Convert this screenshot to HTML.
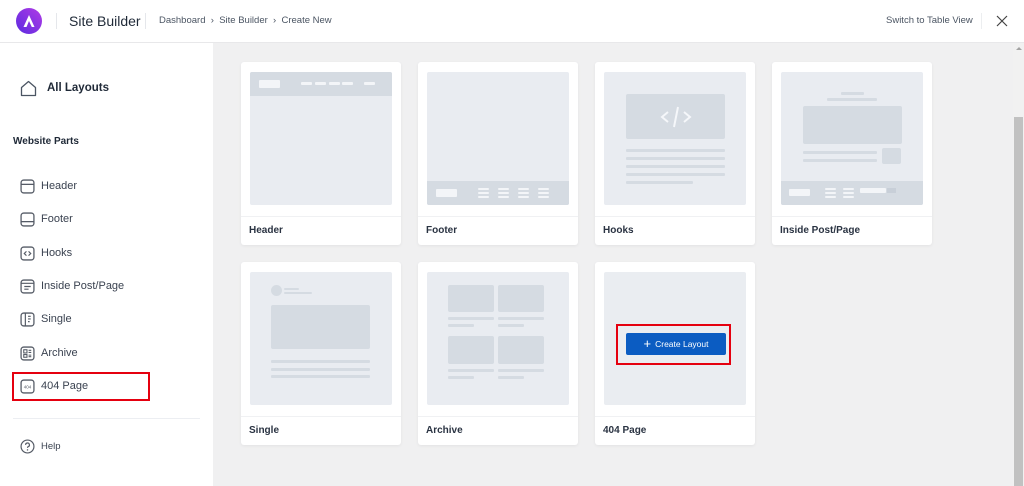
<!DOCTYPE html>
<html><head><meta charset="utf-8"><style>
*{margin:0;padding:0;box-sizing:border-box}
body{width:1024px;height:486px;overflow:hidden;background:#f0f0f1;font-family:"Liberation Sans",sans-serif;color:#1e293b;position:relative}
.a{position:absolute}
.hdr{left:0;top:0;width:1024px;height:43px;background:#fff;border-bottom:1px solid #e8e8ea}
.side{left:0;top:43px;width:213px;height:443px;background:#fff}
.card{position:absolute;width:160px;height:183px;background:#fff;border-radius:3px;box-shadow:0 1px 3px rgba(0,0,0,.06)}
.pv{position:absolute;left:9px;top:10px;width:142px;height:133px;background:#e9ecf1;border-radius:2px;overflow:hidden}
.lbl{position:absolute;left:0;top:154px;width:160px;border-top:1px solid #f0f1f3;padding:7px 8px;font-size:10px;font-weight:bold;color:#2a3342;line-height:14px}
.d{position:absolute;background:#d5dbe2;border-radius:1px}
.w{position:absolute;background:#f3f5f8;border-radius:1px}
.it{position:absolute;left:20px;font-size:11px;color:#3a4250;display:flex;align-items:center;gap:6px;height:16px}
.it svg{width:15px;height:15px;flex:none}
</style></head><body>
<div class="a hdr"></div>
<svg class="a" style="left:16px;top:8px" width="26" height="26" viewBox="0 0 26 26"><defs><linearGradient id="g" x1="0" y1="1" x2="1" y2="0"><stop offset="0" stop-color="#5b2be0"/><stop offset="1" stop-color="#b13be6"/></linearGradient></defs><circle cx="13" cy="13" r="13" fill="url(#g)"/><path d="M7.5 19 L13 7 L18.5 19 L15.8 19 L13 13 L10.5 19Z" fill="#fff"/></svg>
<div class="a" style="left:56px;top:13px;width:1px;height:16px;background:#e5e7eb"></div>
<div class="a" style="left:69px;top:13px;font-size:14px;color:#1f2937;font-weight:500">Site Builder</div>
<div class="a" style="left:145px;top:13px;width:1px;height:16px;background:#e5e7eb"></div>
<div class="a" style="left:159px;top:15px;font-size:9.5px;color:#4b5563">Dashboard &nbsp;›&nbsp; Site Builder &nbsp;›&nbsp; Create New</div>
<div class="a" style="left:886px;top:15px;font-size:9.5px;color:#4b5563">Switch to Table View</div>
<div class="a" style="left:981px;top:13px;width:1px;height:16px;background:#eceef0"></div>
<svg class="a" style="left:996px;top:15px" width="12" height="12" viewBox="0 0 12 12"><path d="M1 1L11 11M11 1L1 11" stroke="#444" stroke-width="1.2"/></svg>

<div class="a side"></div>
<svg class="a" style="left:20px;top:80px" width="17" height="17" viewBox="0 0 17 17"><path d="M1.5 7.5 L8.5 1.5 L15.5 7.5 V15.5 H1.5Z" fill="none" stroke="#4b5563" stroke-width="1.3" stroke-linejoin="round"/></svg>
<div class="a" style="left:47px;top:82px;font-size:11.5px;font-weight:bold;color:#1f2937">All Layouts</div>
<div class="a" style="left:13px;top:136px;font-size:10px;font-weight:bold;color:#1f2937">Website Parts</div>
<div class="it" style="top:178px"><svg viewBox="0 0 14 14"><rect x="1" y="1" width="12" height="12" rx="2.5" fill="none" stroke="#555b66" stroke-width="1.2"/><path d="M1 5H13" stroke="#555b66" stroke-width="1.2"/></svg>Header</div>
<div class="it" style="top:211px"><svg viewBox="0 0 14 14"><rect x="1" y="1" width="12" height="12" rx="2.5" fill="none" stroke="#555b66" stroke-width="1.2"/><path d="M1 9H13" stroke="#555b66" stroke-width="1.2"/></svg>Footer</div>
<div class="it" style="top:245px"><svg viewBox="0 0 14 14"><rect x="1" y="1" width="12" height="12" rx="2.5" fill="none" stroke="#555b66" stroke-width="1.2"/><path d="M6 5L4 7L6 9M8 5L10 7L8 9" fill="none" stroke="#555b66" stroke-width="1.1"/></svg>Hooks</div>
<div class="it" style="top:278px"><svg viewBox="0 0 14 14"><rect x="1" y="1" width="12" height="12" rx="2.5" fill="none" stroke="#555b66" stroke-width="1.2"/><path d="M1 4H13M4 7H10M4 9.5H8" stroke="#555b66" stroke-width="1.1"/></svg>Inside Post/Page</div>
<div class="it" style="top:311px"><svg viewBox="0 0 14 14"><rect x="1" y="1" width="12" height="12" rx="2.5" fill="none" stroke="#555b66" stroke-width="1.2"/><path d="M5 1V13M7.5 4H10M7.5 6.5H10M7.5 9H9" stroke="#555b66" stroke-width="1.1"/></svg>Single</div>
<div class="it" style="top:345px"><svg viewBox="0 0 14 14"><rect x="1" y="1" width="12" height="12" rx="2.5" fill="none" stroke="#555b66" stroke-width="1.2"/><rect x="3.5" y="3.5" width="3" height="3" fill="none" stroke="#555b66"/><rect x="3.5" y="8" width="3" height="2.5" fill="none" stroke="#555b66"/><path d="M8 4H10.5M8 6H10.5M8 8.5H10.5M8 10H10.5" stroke="#555b66"/></svg>Archive</div>
<div class="it" style="top:378px"><svg viewBox="0 0 14 14"><rect x="1" y="1" width="12" height="12" rx="2.5" fill="none" stroke="#555b66" stroke-width="1.2"/><text x="7" y="8.7" font-size="4.2" text-anchor="middle" fill="#555b66" font-family="Liberation Sans">404</text></svg>404 Page</div>
<div class="a" style="left:12px;top:372px;width:138px;height:29px;border:2px solid #e5000f"></div>
<div class="a" style="left:13px;top:418px;width:187px;height:1px;background:#eceef2"></div>
<div class="it" style="top:438px;font-size:9.5px"><svg viewBox="0 0 14 14"><circle cx="7" cy="7" r="6" fill="none" stroke="#555b66" stroke-width="1.1"/><path d="M5.2 5.5a1.8 1.8 0 1 1 2.4 1.7c-.5.2-.6.5-.6 1.1" fill="none" stroke="#555b66" stroke-width="1.1"/><circle cx="7" cy="10.2" r=".7" fill="#555b66"/></svg>Help</div>

<div class="a" style="left:1013px;top:43px;width:11px;height:443px;background:#f1f1f1"></div>
<div class="a" style="left:1014px;top:117px;width:9px;height:369px;background:#c1c1c1"></div>
<div class="a" style="left:1016px;top:47px;width:0;height:0;border-left:3px solid transparent;border-right:3px solid transparent;border-bottom:3px solid #a3a3a3"></div>

<div class="card" style="left:241px;top:62px"><div class="pv">
<div class="d" style="left:0;top:0;width:142px;height:24px;border-radius:0"></div>
<div class="w" style="left:9px;top:8px;width:21px;height:8px"></div>
<div class="w" style="left:51px;top:10px;width:11px;height:3px"></div><div class="w" style="left:65px;top:10px;width:11px;height:3px"></div><div class="w" style="left:79px;top:10px;width:11px;height:3px"></div><div class="w" style="left:92px;top:10px;width:11px;height:3px"></div><div class="w" style="left:114px;top:10px;width:11px;height:3px"></div>
</div><div class="lbl">Header</div></div>

<div class="card" style="left:418px;top:62px"><div class="pv">
<div class="d" style="left:0;top:109px;width:142px;height:24px;border-radius:0"></div>
<div class="w" style="left:9px;top:117px;width:21px;height:8px"></div>
<div class="w" style="left:51px;top:116px;width:11px;height:2px"></div><div class="w" style="left:51px;top:120px;width:11px;height:2px"></div><div class="w" style="left:51px;top:124px;width:11px;height:2px"></div>
<div class="w" style="left:71px;top:116px;width:11px;height:2px"></div><div class="w" style="left:71px;top:120px;width:11px;height:2px"></div><div class="w" style="left:71px;top:124px;width:11px;height:2px"></div>
<div class="w" style="left:91px;top:116px;width:11px;height:2px"></div><div class="w" style="left:91px;top:120px;width:11px;height:2px"></div><div class="w" style="left:91px;top:124px;width:11px;height:2px"></div>
<div class="w" style="left:111px;top:116px;width:11px;height:2px"></div><div class="w" style="left:111px;top:120px;width:11px;height:2px"></div><div class="w" style="left:111px;top:124px;width:11px;height:2px"></div>
</div><div class="lbl">Footer</div></div>

<div class="card" style="left:595px;top:62px"><div class="pv">
<div class="d" style="left:22px;top:22px;width:99px;height:45px;border-radius:2px"></div>
<svg class="a" style="left:56px;top:32px" width="32" height="26" viewBox="0 0 32 26"><path d="M8 8L2 13L8 18M24 8L30 13L24 18M18 3L14 23" fill="none" stroke="#f5f7fa" stroke-width="2"/></svg>
<div class="d" style="left:22px;top:77px;width:99px;height:3px"></div><div class="d" style="left:22px;top:85px;width:99px;height:3px"></div><div class="d" style="left:22px;top:93px;width:99px;height:3px"></div><div class="d" style="left:22px;top:101px;width:99px;height:3px"></div><div class="d" style="left:22px;top:109px;width:67px;height:3px"></div>
</div><div class="lbl">Hooks</div></div>

<div class="card" style="left:772px;top:62px"><div class="pv">
<div class="d" style="left:60px;top:20px;width:23px;height:3px"></div><div class="d" style="left:46px;top:26px;width:50px;height:3px"></div>
<div class="d" style="left:22px;top:34px;width:99px;height:38px;border-radius:2px"></div>
<div class="d" style="left:22px;top:79px;width:74px;height:3px"></div><div class="d" style="left:22px;top:87px;width:74px;height:3px"></div>
<div class="d" style="left:101px;top:76px;width:19px;height:16px;border-radius:2px"></div>
<div class="d" style="left:0;top:109px;width:142px;height:24px;border-radius:0"></div>
<div class="w" style="left:8px;top:117px;width:21px;height:7px"></div>
<div class="w" style="left:44px;top:116px;width:11px;height:2px"></div><div class="w" style="left:44px;top:120px;width:11px;height:2px"></div><div class="w" style="left:44px;top:124px;width:11px;height:2px"></div>
<div class="w" style="left:62px;top:116px;width:11px;height:2px"></div><div class="w" style="left:62px;top:120px;width:11px;height:2px"></div><div class="w" style="left:62px;top:124px;width:11px;height:2px"></div>
<div class="w" style="left:79px;top:116px;width:26px;height:5px"></div><div style="position:absolute;left:106px;top:116px;width:9px;height:5px;background:#c8cfd8"></div>
</div><div class="lbl">Inside Post/Page</div></div>

<div class="card" style="left:241px;top:262px"><div class="pv">
<div class="d" style="left:21px;top:13px;width:11px;height:11px;border-radius:50%"></div>
<div class="d" style="left:34px;top:16px;width:15px;height:2px"></div><div class="d" style="left:34px;top:20px;width:28px;height:2px"></div>
<div class="d" style="left:21px;top:33px;width:99px;height:44px;border-radius:2px"></div>
<div class="d" style="left:21px;top:88px;width:99px;height:3px"></div><div class="d" style="left:21px;top:96px;width:99px;height:3px"></div><div class="d" style="left:21px;top:103px;width:99px;height:3px"></div>
</div><div class="lbl">Single</div></div>

<div class="card" style="left:418px;top:262px"><div class="pv">
<div class="d" style="left:21px;top:13px;width:46px;height:27px;border-radius:2px"></div><div class="d" style="left:71px;top:13px;width:46px;height:27px;border-radius:2px"></div>
<div class="d" style="left:21px;top:45px;width:46px;height:3px"></div><div class="d" style="left:71px;top:45px;width:46px;height:3px"></div>
<div class="d" style="left:21px;top:52px;width:26px;height:3px"></div><div class="d" style="left:71px;top:52px;width:26px;height:3px"></div>
<div class="d" style="left:21px;top:64px;width:46px;height:28px;border-radius:2px"></div><div class="d" style="left:71px;top:64px;width:46px;height:28px;border-radius:2px"></div>
<div class="d" style="left:21px;top:97px;width:46px;height:3px"></div><div class="d" style="left:71px;top:97px;width:46px;height:3px"></div>
<div class="d" style="left:21px;top:104px;width:26px;height:3px"></div><div class="d" style="left:71px;top:104px;width:26px;height:3px"></div>
</div><div class="lbl">Archive</div></div>

<div class="card" style="left:595px;top:262px"><div class="pv" style="background:#eaedf1"></div><div class="lbl">404 Page</div></div>
<div class="a" style="left:626px;top:333px;width:100px;height:22px;background:#0b5cc2;border-radius:2px;color:#fff;font-size:8.5px;display:flex;align-items:center;justify-content:center;gap:4px"><span style="font-size:13px;line-height:10px">+</span>Create Layout</div>
<div class="a" style="left:616px;top:324px;width:115px;height:41px;border:2px solid #e5000f"></div>
</body></html>
